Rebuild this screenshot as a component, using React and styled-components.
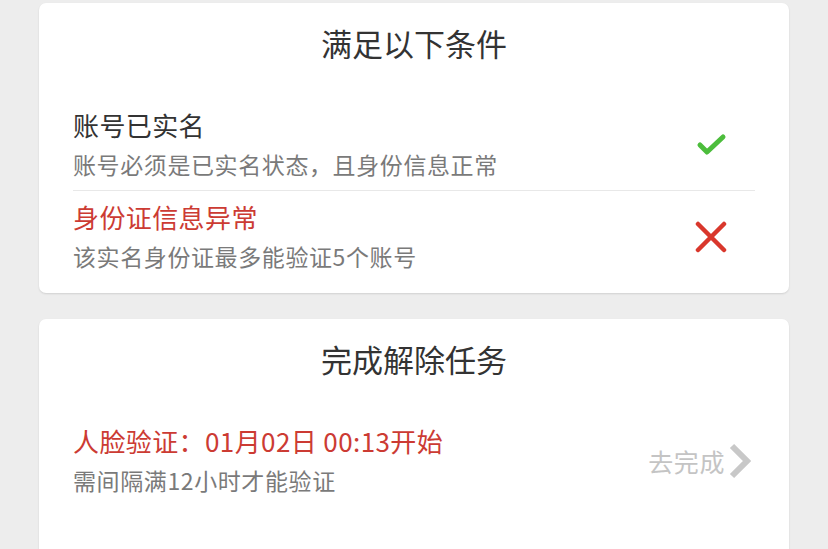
import styled, { createGlobalStyle } from 'styled-components';

const GlobalStyle = createGlobalStyle`
    html, body {
        margin: 0;
        padding: 0;
        background: #ededed;
    }
    body {
        font-family: "Noto Sans CJK SC", "Noto Sans", "Liberation Sans", sans-serif;
    }
`;

const Page = styled.div`
    padding: 3px 39px 0;
    display: flex;
    flex-direction: column;
    gap: 26px;
    height: 549px;
    overflow: hidden;
    box-sizing: border-box;
`;

const Card = styled.div`
    background: #fff;
    border-radius: 7px;
    box-shadow: 0 1px 2px rgba(0, 0, 0, 0.12);
    padding: 0 34px ${(p) => p.$bottom || 11}px;
    flex-shrink: 0;
`;

const CardTitle = styled.h2`
    margin: 0;
    padding: 22px 0 38px;
    font-size: 31px;
    line-height: 36px;
    font-weight: 400;
    text-align: center;
    color: #333;
`;

const Row = styled.div`
    display: flex;
    align-items: center;
    padding: 8px 0;
    border-top: ${(p) => (p.$divider ? '1px solid #e8e8e8' : 'none')};
`;

const Info = styled.div`
    flex: 1;
    display: flex;
    flex-direction: column;
    gap: 3px;
`;

const Name = styled.div`
    font-size: 26px;
    line-height: 36px;
    letter-spacing: 0.4px;
    color: ${(p) => (p.$warn ? '#cc3b33' : '#333')};
`;

const Desc = styled.div`
    font-size: 23px;
    line-height: 36px;
    letter-spacing: 0.6px;
    color: #7a7a7a;
`;

const Status = styled.div`
    width: 34px;
    display: flex;
    justify-content: center;
    margin-right: 27px;
`;

const GoLink = styled.div`
    display: flex;
    align-items: center;
    gap: 4px;
    font-size: 25px;
    letter-spacing: 0.6px;
    color: #c4c4c4;
    margin-right: 4px;
`;

const Check = () => (
    <svg width="32" height="26" viewBox="0 0 32 26">
        <polyline points="5,13 12,20 28,5" fill="none" stroke="#4cbd3c" strokeWidth="5" strokeLinecap="round" strokeLinejoin="round" />
    </svg>
);

const Cross = () => (
    <svg width="34" height="32" viewBox="0 0 34 32">
        <path d="M4 3 L30 29 M30 3 L4 29" fill="none" stroke="#d9372c" strokeWidth="4.5" strokeLinecap="round" />
    </svg>
);

const Chevron = () => (
    <svg width="22" height="36" viewBox="0 0 22 36">
        <polyline points="3,3 18,18 3,33" fill="none" stroke="#c8c8c8" strokeWidth="6" strokeLinejoin="miter" />
    </svg>
);

function App() {
    return (
        <>
            <GlobalStyle />
            <Page>
                <Card>
                    <CardTitle>满足以下条件</CardTitle>
                    <Row>
                        <Info>
                            <Name>账号已实名</Name>
                            <Desc>账号必须是已实名状态，且身份信息正常</Desc>
                        </Info>
                        <Status><Check /></Status>
                    </Row>
                    <Row $divider>
                        <Info>
                            <Name $warn>身份证信息异常</Name>
                            <Desc>该实名身份证最多能验证5个账号</Desc>
                        </Info>
                        <Status><Cross /></Status>
                    </Row>
                </Card>
                <Card $bottom={80}>
                    <CardTitle>完成解除任务</CardTitle>
                    <Row>
                        <Info>
                            <Name $warn>人脸验证：01月02日 00:13开始</Name>
                            <Desc>需间隔满12小时才能验证</Desc>
                        </Info>
                        <GoLink>去完成<Chevron /></GoLink>
                    </Row>
                </Card>
            </Page>
        </>
    );
}

export default App;
